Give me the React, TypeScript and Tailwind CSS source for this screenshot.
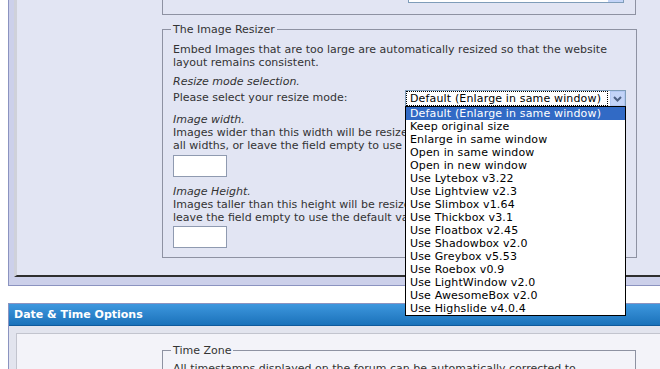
import React from "react";

const modes = [
  "Default (Enlarge in same window)",
  "Keep original size",
  "Enlarge in same window",
  "Open in same window",
  "Open in new window",
  "Use Lytebox v3.22",
  "Use Lightview v2.3",
  "Use Slimbox v1.64",
  "Use Thickbox v3.1",
  "Use Floatbox v2.45",
  "Use Shadowbox v2.0",
  "Use Greybox v5.53",
  "Use Roebox v0.9",
  "Use LightWindow v2.0",
  "Use AwesomeBox v2.0",
  "Use Highslide v4.0.4",
];

function ResizeSelect() {
  return (
    <div className="relative flex h-[17px] w-[221px] border border-[#7f9db9] bg-white">
      <div className="flex-1 border border-dotted border-black pl-[3px] leading-[13px] tracking-[0.15px] text-black">
        Default (Enlarge in same window)
      </div>
      <div className="ml-[2px] flex w-[15px] items-center justify-center border border-[#b3c8f3] bg-[#c3d4f8]">
        <svg width="9" height="6" viewBox="0 0 9 6">
          <polyline points="1,1 4.5,4.5 8,1" fill="none" stroke="#4d6185" strokeWidth="2" />
        </svg>
      </div>
      <ul className="absolute left-[-1px] top-full z-10 w-[221px] border border-black bg-white tracking-[0.15px] text-black">
        {modes.map((m, i) => (
          <li
            key={m}
            className={
              i === 0
                ? "h-[13px] bg-[#316ac5] pl-[4px] leading-[13px] whitespace-nowrap text-white"
                : "h-[13px] pl-[4px] leading-[13px] whitespace-nowrap"
            }
          >
            {m}
          </li>
        ))}
      </ul>
    </div>
  );
}

function SizeInput() {
  return <div className="h-[22px] w-[54px] border border-[#8f9ab0] bg-white" />;
}

export default function App() {
  return (
    <div className="h-[369px] w-[660px] overflow-hidden bg-white font-['DejaVu_Sans',_Verdana,_sans-serif] text-[11px] leading-[13px] text-[#333]">
      {/* upper panel */}
      <div className="ml-2 border-b border-l border-[#8b93c0] bg-[#ccd0ea] pb-[8px] pl-[5px]">
        <div className="h-[277px] border-b-2 border-l-[3px] border-b-[#2e2e2e] border-l-[#cfd1da] bg-[#e2e5f3] pl-[145px]">
          <div className="h-[15px] w-[474px] border-x border-b border-[#8e92a2]">
            <div className="ml-[245px] flex h-[3px] w-[216px] border-x border-b border-[#7f9db9] bg-white">
              <div className="ml-auto w-[15px] bg-[#c3d4f8]" />
            </div>
          </div>

          <fieldset className="mt-[8px] w-[474px] border border-[#8e92a2] pb-[9px] pl-[8px] pr-[10px] pt-[7px]">
            <legend className="px-[2px] leading-[13px]">The Image Resizer</legend>
            <div className="pl-[2px] whitespace-nowrap">
              <div>
                Embed Images that are too large are automatically resized so that the website
                <br />
                layout remains consistent.
              </div>
              <div className="mt-[6px] italic">Resize mode selection.</div>
              <div className="mt-[2px] flex h-[17px] items-start">
                <div className="mt-[1px] w-[232px]">Please select your resize mode:</div>
                <ResizeSelect />
              </div>
              <div className="mt-[6px] italic">Image width.</div>
              {/* the open list covers the rest of these lines */}
              <div className="w-[232px] overflow-hidden">
                Images wider than this width will be resized. Enter 0 to resize
                <br />
                all widths, or leave the field empty to use the default value.
              </div>
              <div className="mt-[3px]">
                <SizeInput />
              </div>
              <div className="mt-[8px] italic">Image Height.</div>
              <div className="w-[232px] overflow-hidden">
                Images taller than this height will be resized. Enter 0 or
                <br />
                leave the field empty to use the default value.
              </div>
              <div className="mt-[2px]">
                <SizeInput />
              </div>
            </div>
          </fieldset>
        </div>
      </div>

      {/* Date & Time Options */}
      <div className="ml-2 mt-[17px] border-l border-t border-[#8b93c0] bg-[#e2e4ee]">
        <div className="flex h-[22px] items-center border-b border-[#0f5a9c] bg-gradient-to-b from-[#3d97de] to-[#1a72ba] pl-[5px] font-bold text-white">
          Date &amp; Time Options
        </div>
        <div className="pl-[7px] pt-[7px]">
          <div className="h-[60px] border-l border-t border-[#c2c4ce] bg-[#f3f3f9] pl-[145px] pt-[10px]">
            <fieldset className="w-[474px] border border-[#8e92a2] pl-[8px] pr-[10px] pt-[5px]">
              <legend className="px-[2px] leading-[13px]">Time Zone</legend>
              <div className="pl-[2px] whitespace-nowrap">
                All timestamps displayed on the forum can be automatically corrected to
              </div>
            </fieldset>
          </div>
        </div>
      </div>
    </div>
  );
}
